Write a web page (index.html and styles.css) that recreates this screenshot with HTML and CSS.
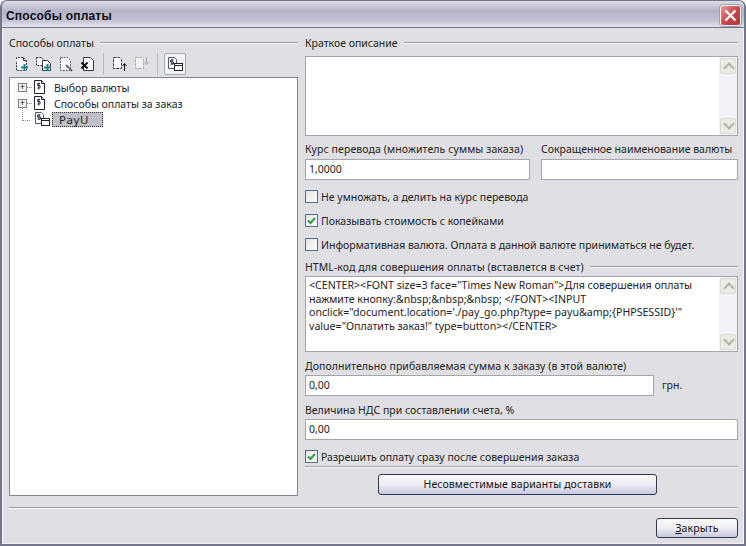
FILE: index.html
```html
<!DOCTYPE html>
<html lang="ru">
<head>
<meta charset="utf-8">
<title>Способы оплаты</title>
<link rel="stylesheet" href="styles.css">
</head>
<body>
<svg class="defs" width="0" height="0">
  <symbol id="dollar" viewBox="0 0 16 16">
    <path d="M2.500 1.500h7l3 3v10h-10z" fill="#fff" stroke="#223"/>
    <path d="M9.500 1.500v3h3" fill="#e8e8e8" stroke="#223"/>
    <path d="M8 4.500H5.500v2H8v2.500H5.500M6.800 3.500v7" fill="none" stroke="#223" stroke-width=".9"/>
  </symbol>
  <symbol id="pay" viewBox="0 0 16 16">
    <path d="M1.500 1.500h6l2 2v4h-2v5h-6z" fill="#fff" stroke="#4a5a7a"/>
    <path d="M6.500 4H3.500v2h3v2h-3M5 3v6" fill="none" stroke="#223" stroke-width=".9"/>
    <rect x="7.500" y="7.500" width="8" height="7" fill="#fff" stroke="#222"/>
    <path d="M7.500 9.500h8" stroke="#222"/>
  </symbol>
</svg>
<main class="window">
  <header class="titlebar">
    <h1 class="title">Способы оплаты</h1>
    <span class="close-x">
      <svg width="21" height="21" viewBox="0 0 21 21"><path d="M5.500 5.500l10 10M15.500 5.500l-10 10" stroke="#fff" stroke-width="2.400" fill="none"/></svg>
    </span>
  </header>
  <div class="content">
    <div class="columns">
      <section class="left">
        <div class="group-head"><span>Способы оплаты</span><i class="rule"></i></div>
        <div class="toolbar">
          <span class="tool"><svg width="16" height="16" viewBox="0 0 16 16"><path d="M2.500 3V1.500h7l3 3v10h-10V5" fill="#fff" stroke="#334" stroke-dasharray="2 1"/><path d="M9.500 1.500v3h3" fill="none" stroke="#334"/><path d="M7 11.500h7M10.500 8v7" stroke="#1f7f8c" stroke-width="2"/></svg></span>
          <span class="tool"><svg width="16" height="16" viewBox="0 0 16 16"><path d="M.5 1.500h5l2 2v6h-7z" fill="#fff" stroke="#334" stroke-dasharray="2 1"/><path d="M6.500 4.500h5l3 3v7h-8z" fill="#fff" stroke="#334"/><path d="M8 11.500h7M11.500 8v7" stroke="#1f7f8c" stroke-width="2"/></svg></span>
          <span class="tool"><svg width="16" height="16" viewBox="0 0 16 16"><path d="M2.500 1.500h7l3 3v10h-10z" fill="#fff" stroke="#556" stroke-dasharray="2 1"/><path d="M8 9l6 6" stroke="#667" stroke-width="2"/></svg></span>
          <span class="tool"><svg width="16" height="16" viewBox="0 0 16 16"><path d="M3.500 1.500h7l3 3v10h-10z" fill="#fff" stroke="#334"/><path d="M1.500 6.500l6 6M7.500 6.500l-6 6" stroke="#111" stroke-width="2"/></svg></span>
          <i class="tool-sep"></i>
          <span class="tool"><svg width="16" height="16" viewBox="0 0 16 16"><path d="M1.500 1.500h6l2 2v9h-8z" fill="#fff" stroke="#334" stroke-dasharray="3 1"/><path d="M12.500 15V8M10.500 10l2-2.500 2 2.500" fill="none" stroke="#111"/></svg></span>
          <span class="tool dim"><svg width="16" height="16" viewBox="0 0 16 16"><path d="M1.500 1.500h6l2 2v9h-8z" fill="#fff" stroke="#888" stroke-dasharray="3 1"/><path d="M12.500 1v7M10.500 6l2 2.500 2-2.500" fill="none" stroke="#888"/></svg></span>
          <i class="tool-sep"></i>
          <span class="tool active"><svg width="16" height="16"><use href="#pay"/></svg></span>
        </div>
        <div class="tree">
          <div class="tree-row">
            <i class="expander">+</i><i class="dots"></i>
            <svg class="node-icon" width="16" height="16"><use href="#dollar"/></svg>
            <span class="node-label">Выбор валюты</span>
          </div>
          <div class="tree-row">
            <i class="expander">+</i><i class="dots"></i>
            <svg class="node-icon" width="16" height="16"><use href="#dollar"/></svg>
            <span class="node-label">Способы оплаты за заказ</span>
          </div>
          <div class="tree-row leaf">
            <i class="elbow"></i>
            <svg class="node-icon" width="16" height="16"><use href="#pay"/></svg>
            <span class="node-label selected">PayU</span>
          </div>
        </div>
      </section>
      <section class="right">
        <div class="group-head"><span>Краткое описание</span><i class="rule"></i></div>
        <div class="memo memo-short">
          <div class="memo-text"></div>
          <div class="scrollbar"><i class="sb-btn up"></i><i class="sb-btn down"></i></div>
        </div>
        <div class="pair">
          <div class="field rate">
            <label class="label">Курс перевода (множитель суммы заказа)</label>
            <div class="input">1,0000</div>
          </div>
          <div class="field short-name">
            <label class="label">Сокращенное наименование валюты</label>
            <div class="input"></div>
          </div>
        </div>
        <div class="check check-first"><i class="box"></i><span>Не умножать, а делить на курс перевода</span></div>
        <div class="check"><i class="box checked"><svg width="11" height="11" viewBox="0 0 11 11"><path d="M2 5.500l2.500 2.500L9 3" fill="none" stroke="#2f9e3f" stroke-width="2"/></svg></i><span>Показывать стоимость с копейками</span></div>
        <div class="check"><i class="box"></i><span>Информативная валюта. Оплата в данной валюте приниматься не будет.</span></div>
        <div class="group-head html-head"><span>HTML-код для совершения оплаты (вставлется в счет)</span><i class="rule"></i></div>
        <div class="memo memo-html">
          <div class="memo-text">&lt;CENTER&gt;&lt;FONT size=3 face="Times New Roman"&gt;Для совершения оплаты<br>нажмите кнопку:&amp;nbsp;&amp;nbsp;&amp;nbsp; &lt;/FONT&gt;&lt;INPUT<br>onclick="document.location='./pay_go.php?type= payu&amp;amp;{PHPSESSID}'"<br>value="Оплатить заказ!" type=button&gt;&lt;/CENTER&gt;</div>
          <div class="scrollbar"><i class="sb-btn up"></i><i class="sb-btn down"></i></div>
        </div>
        <div class="field extra">
          <label class="label">Дополнительно прибавляемая сумма к заказу (в этой валюте)</label>
          <div class="input-line"><div class="input grow">0,00</div><span class="unit">грн.</span></div>
        </div>
        <div class="field vat">
          <label class="label">Величина НДС при составлении счета, %</label>
          <div class="input">0,00</div>
        </div>
        <div class="check check-last"><i class="box checked"><svg width="11" height="11" viewBox="0 0 11 11"><path d="M2 5.500l2.500 2.500L9 3" fill="none" stroke="#2f9e3f" stroke-width="2"/></svg></i><span>Разрешить оплату сразу после совершения заказа</span></div>
        <hr class="thin">
        <div class="center-btn"><button class="btn wide">Несовместимые варианты доставки</button></div>
      </section>
    </div>
    <hr class="divider">
    <div class="footer"><button class="btn close-btn"><u>З</u>акрыть</button></div>
  </div>
</main>
</body>
</html>
```
FILE: styles.css
```css
* { box-sizing: border-box; }
html, body { margin: 0; padding: 0; }
body { width: 746px; height: 546px; overflow: hidden; background: #fff; font: 10.5px/13px "Noto Sans", "Liberation Sans", sans-serif; color: #111; }
.defs { position: absolute; }
i { display: block; font-style: normal; }
.window { width: 746px; height: 546px; display: flex; flex-direction: column; background: #e0dfe3; border: 2px solid #74748a; border-top-width: 1px; border-radius: 7px 7px 0 0; box-shadow: inset 1px 0 #f6f6f8, inset -1px 0 #f6f6f8, inset 0 -1px #f0f0f2; overflow: hidden; }
.titlebar { height: 27px; flex: none; display: flex; align-items: center; justify-content: space-between; margin: 0 -2px; padding: 3px 5px 0 6px; background: linear-gradient(#dddde6 0%, #b4b4c8 40%, #c4c4d4 75%, #e4e4ec 100%); border-bottom: 1px solid #74748a; }
.title { margin: 0; font-size: 12px; line-height: 14px; font-weight: 700; color: #0c0c14; font-family: "Liberation Sans", sans-serif; letter-spacing: .2px; }
.close-x { width: 21px; height: 21px; border-radius: 3px; background: linear-gradient(135deg, #e89a90, #c8434a 55%, #b23038); border: 1px solid #fff; outline: 1px solid #a0a0b0; display: block; line-height: 0; margin-top: -1px; }
.close-x svg { margin: -1px; }
.content { flex: 1; min-height: 0; padding: 0 6px 0 7px; display: flex; flex-direction: column; }
.columns { display: flex; gap: 7px; height: 469px; flex: none; }
.left { width: 289px; flex: none; padding-top: 8px; display: flex; flex-direction: column; }
.right { width: 433px; flex: none; padding-top: 8px; }
.group-head { display: flex; align-items: center; gap: 6px; height: 13px; white-space: nowrap; color: #222; }
.group-head span { padding-top: 2px; }
.html-head span { letter-spacing: .06px; }
.rule { flex: 1; height: 2px; border-top: 1px solid #9a9aa2; border-bottom: 1px solid #fff; }
.toolbar { height: 26px; margin-top: 2px; display: flex; align-items: center; padding-left: 2px; }
.tool { width: 22px; height: 22px; display: flex; align-items: center; justify-content: center; }
.tool.dim { opacity: .6; }
.tool.active { background: #f3f3f6; border: 1px solid #a8a8b4; border-radius: 2px; margin-left: 1px; }
.tool-sep { width: 1px; height: 22px; background: #b8b8c0; margin: 0 5px 0 4px; }
.tree { flex: 1; margin: 0 0 1px; background: #fff; border: 1px solid #85858f; padding: 1px 0 0 7px; }
.tree-row { height: 16px; display: flex; align-items: center; }
.expander { width: 9px; height: 9px; border: 1px solid #7d7d85; background: #f4f4f0; font: 9px/7px "Liberation Sans", sans-serif; text-align: center; color: #111; margin-left: 1px; }
.dots { width: 5px; border-top: 1px dotted #888; }
.elbow { width: 8px; height: 14px; margin: -10px 0 0 5px; border-left: 1px dotted #888; border-bottom: 1px dotted #888; }
.node-icon { margin: 0 6px 0 0; flex: none; }
.tree-row.leaf .node-icon { margin-right: 2px; margin-left: 4px; }
.node-label { color: #222; white-space: nowrap; padding-top: 2px; }
.selected { background: #c0c0ca; border: 1px dotted #333; padding: 0 8px 0 6px; width: 51px; height: 15px; line-height: 13px; letter-spacing: .6px; font-size: 11.5px; }
.memo { display: flex; background: #fff; border: 1px solid #a5a5ad; margin-top: 7px; }
.memo-short { height: 80px; }
.memo-html { height: 76px; margin-top: 3px; }
.memo-text { flex: 1; padding: 2px 3px 0; line-height: 13.5px; white-space: nowrap; color: #222; font-size: 10.6px; }
.scrollbar { width: 18px; flex: none; background: #f2f2f6; padding: 1px; display: flex; flex-direction: column; justify-content: space-between; }
.sb-btn { height: 16px; background: #ecece4; border: 1px solid #dcdcd4; border-radius: 2px; position: relative; }
.sb-btn::after { content: ""; position: absolute; left: 4px; top: 5px; width: 6px; height: 6px; border: solid #b4b4a8; border-width: 2px 0 0 2px; transform: rotate(45deg); }
.sb-btn.down::after { top: 1px; transform: rotate(225deg); }
.pair { display: flex; gap: 11px; margin-top: 6px; }
.pair .label { margin-bottom: 4px; }
.rate { width: 225px; flex: none; }
.rate .label { letter-spacing: .1px; }
.extra .label { letter-spacing: .07px; }
.short-name { flex: 1; }
.label { display: block; height: 13px; line-height: 15px; margin-bottom: 3px; white-space: nowrap; color: #222; }
.input { height: 21px; background: #fff; border: 1px solid #a5a5ad; padding: 3px 3px 0; color: #222; }
.check { display: flex; align-items: center; gap: 3px; height: 14px; margin-top: 10px; color: #222; white-space: nowrap; }
.check span { padding-top: 2px; }
.check-first { margin-top: 9px; }
.check-last { margin-top: 9px; }
.box { width: 13px; height: 13px; border: 1px solid #5a6a88; background: linear-gradient(135deg, #e6e4dc, #fdfdfb); display: flex; align-items: center; justify-content: center; flex: none; }
.html-head { margin-top: 9px; }
.extra { margin-top: 7px; }
.input-line { display: flex; align-items: center; gap: 8px; }
.grow { width: 349px; flex: none; }
.unit { color: #222; }
.vat { margin-top: 7px; }
hr { margin: 0; border: 0; }
.thin { height: 2px; border-top: 1px solid #a8a8b0; border-bottom: 1px solid #f4f4f4; margin-top: 3px; }
.center-btn { display: flex; justify-content: center; margin-top: 6px; padding-right: 8px; }
.btn { font: inherit; letter-spacing: .1px; color: #111; border: 1px solid #2c3a54; border-radius: 3px; background: linear-gradient(#fafafc, #eeeef4 50%, #c8c8dc); padding: 0; display: block; }
.wide { width: 279px; height: 21px; }
.divider { height: 2px; border-top: 1px solid #9a9aa2; border-bottom: 1px solid #fff; flex: none; margin-top: 10px; }
.footer { display: flex; justify-content: flex-end; padding-top: 9px; }
.close-btn { width: 82px; height: 20px; }
```
